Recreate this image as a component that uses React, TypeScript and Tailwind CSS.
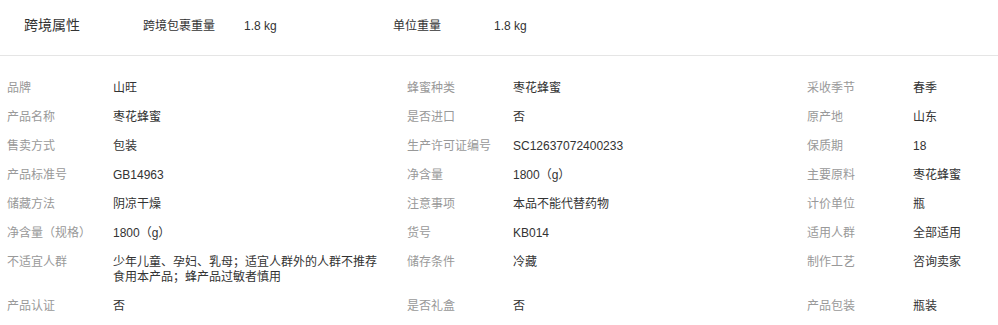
import React from "react";

const font = { fontFamily: '"Liberation Sans", "Noto Sans CJK SC", Arial, sans-serif' };

type Item = [string, string];
const rows: Item[][] = [
  [["品牌", "山旺"], ["蜂蜜种类", "枣花蜂蜜"], ["采收季节", "春季"]],
  [["产品名称", "枣花蜂蜜"], ["是否进口", "否"], ["原产地", "山东"]],
  [["售卖方式", "包装"], ["生产许可证编号", "SC12637072400233"], ["保质期", "18"]],
  [["产品标准号", "GB14963"], ["净含量", "1800（g）"], ["主要原料", "枣花蜂蜜"]],
  [["储藏方法", "阴凉干燥"], ["注意事项", "本品不能代替药物"], ["计价单位", "瓶"]],
  [["净含量（规格）", "1800（g）"], ["货号", "KB014"], ["适用人群", "全部适用"]],
  [
    ["不适宜人群", "少年儿童、孕妇、乳母；适宜人群外的人群不推荐食用本产品；蜂产品过敏者慎用"],
    ["储存条件", "冷藏"],
    ["制作工艺", "咨询卖家"],
  ],
  [["产品认证", "否"], ["是否礼盒", "否"], ["产品包装", "瓶装"]],
];

export default function App() {
  return (
    <div className="w-[998px] h-[325px] bg-white overflow-hidden" style={font}>
      <div className="h-[56px] border-b border-[#e5e5e5] flex items-start pt-[17px] pl-[24px]">
        <div className="w-[119px] text-[14px] leading-[16px] text-[#333]">跨境属性</div>
        <div className="flex items-center text-[12px] leading-[16px] pt-[1px]">
          <div className="w-[101px] text-[#333]">跨境包裹重量</div>
          <div className="w-[149px] text-[#333]">1.8 kg</div>
          <div className="w-[101px] text-[#333]">单位重量</div>
          <div className="text-[#333]">1.8 kg</div>
        </div>
      </div>
      <div className="mt-[18px] grid grid-cols-[400px_400px_198px] text-[12px] leading-[15px]">
        {rows.map((r, i) =>
          r.map(([k, v], j) => (
            <div key={i + "-" + j} className="flex py-[7px] pl-[7px]">
              <div className="w-[106px] shrink-0 text-[#999]">{k}</div>
              <div className="w-[270px] text-[#333]">{v}</div>
            </div>
          ))
        )}
      </div>
    </div>
  );
}
